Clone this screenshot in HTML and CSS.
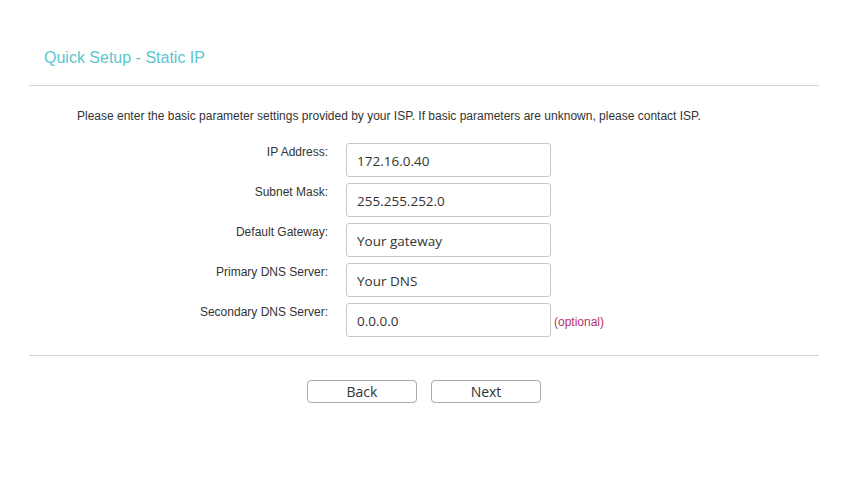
FILE: index.html
```html
<!DOCTYPE html>
<html>
<head>
<meta charset="utf-8">
<link rel="stylesheet" href="styles.css">
</head>
<body>
<div class="page">
  <h1 class="title">Quick Setup - Static IP</h1>
  <div class="rule"></div>
  <p class="intro">Please enter the basic parameter settings provided by your ISP. If basic parameters are unknown, please contact ISP.</p>
  <div class="form">
    <div class="row">
      <label class="label">IP Address:</label>
      <input class="field" type="text" value="172.16.0.40">
    </div>
    <div class="row">
      <label class="label">Subnet Mask:</label>
      <input class="field" type="text" value="255.255.252.0">
    </div>
    <div class="row">
      <label class="label">Default Gateway:</label>
      <input class="field" type="text" value="Your gateway">
    </div>
    <div class="row">
      <label class="label">Primary DNS Server:</label>
      <input class="field" type="text" value="Your DNS">
    </div>
    <div class="row">
      <label class="label">Secondary DNS Server:</label>
      <input class="field" type="text" value="0.0.0.0">
      <span class="hint">(optional)</span>
    </div>
  </div>
  <div class="rule rule-bottom"></div>
  <div class="actions">
    <button class="btn">Back</button>
    <button class="btn">Next</button>
  </div>
</div>
</body>
</html>
```

FILE: styles.css
```css
html, body {
  margin: 0;
  padding: 0;
  background: #ffffff;
}
.page {
  width: 851px;
  height: 502px;
  font-family: "Liberation Sans", Arial, sans-serif;
  color: #333333;
}
.title {
  margin: 0;
  padding: 49px 0 0 44px;
  font-size: 16px;
  line-height: 18px;
  font-weight: normal;
  color: #5cc6cf;
}
.rule {
  margin: 18px 32px 0 29px;
  height: 1px;
  background: #d4d4d4;
}
.intro {
  margin: 23px 0 0 77px;
  font-size: 12px;
  line-height: 14px;
  color: #333333;
}
.form {
  margin-top: 20px;
  display: flex;
  flex-direction: column;
  gap: 6px;
}
.row {
  display: grid;
  grid-template-columns: 328px 205px auto;
  column-gap: 18px;
  align-items: start;
}
.label {
  text-align: right;
  font-size: 12px;
  line-height: 14px;
  padding-top: 2px;
  color: #333333;
}
.field {
  box-sizing: border-box;
  width: 205px;
  height: 34px;
  margin: 0;
  padding: 1px 10px 0;
  border: 1px solid #c8c8c8;
  border-radius: 3px;
  font-family: "Open Sans", "DejaVu Sans", sans-serif;
  font-size: 13.5px;
  color: #333333;
  background: #ffffff;
  outline: none;
}
.hint {
  margin-left: -15px;
  padding-top: 12px;
  font-size: 12px;
  line-height: 14px;
  color: #b5316f;
}
.rule-bottom {
  margin-top: 18px;
}
.actions {
  margin-top: 24px;
  display: flex;
  gap: 14px;
  padding-left: 307px;
}
.btn {
  box-sizing: border-box;
  width: 110px;
  height: 23px;
  margin: 0;
  padding: 0;
  border: 1px solid #a9a9a9;
  border-radius: 4px;
  background: #ffffff;
  font-family: "Open Sans", "DejaVu Sans", sans-serif;
  font-size: 14px;
  color: #333333;
}
```
